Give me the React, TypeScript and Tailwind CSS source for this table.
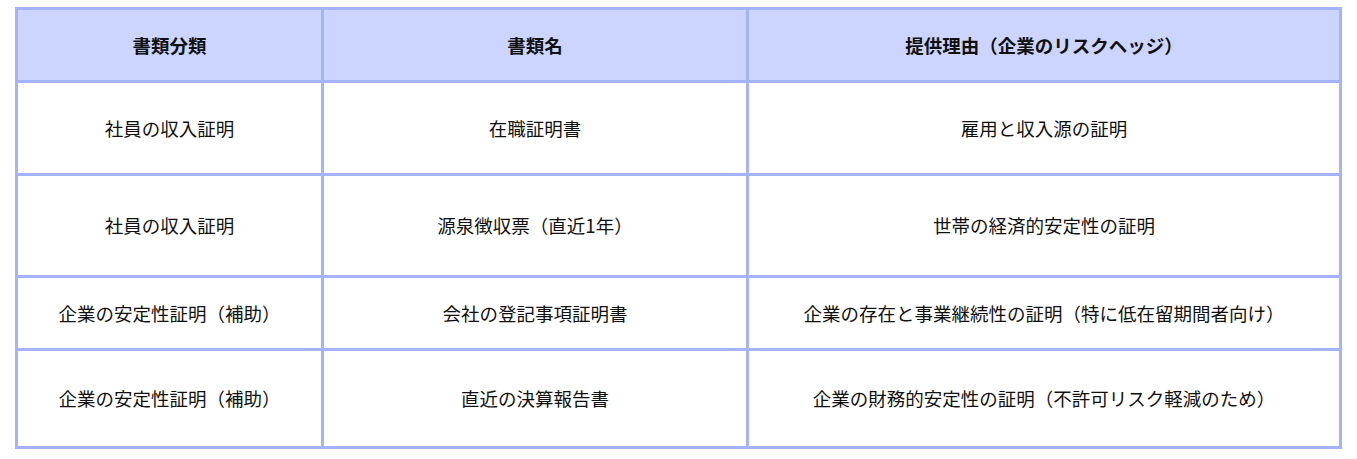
const rows = [
  ["社員の収入証明", "在職証明書", "雇用と収入源の証明"],
  ["社員の収入証明", "源泉徴収票（直近1年）", "世帯の経済的安定性の証明"],
  ["企業の安定性証明（補助）", "会社の登記事項証明書", "企業の存在と事業継続性の証明（特に低在留期間者向け）"],
  ["企業の安定性証明（補助）", "直近の決算報告書", "企業の財務的安定性の証明（不許可リスク軽減のため）"],
];

const heights = ["h-[93px]", "h-[102px]", "h-[73px]", "h-[98px]"];

export default function App() {
  return (
    <div
      className="bg-white px-[15px] pt-[7px] w-[1357px] h-[459px]"
      style={{ fontFamily: '"Noto Sans CJK JP", "Noto Sans", sans-serif' }}
    >
      <table className="w-[1327px] table-fixed border-collapse border-[3px] border-[#a3b3ff] text-[18.5px] leading-[1.3] text-[#111]">
        <colgroup>
          <col className="w-[306px]" />
          <col className="w-[425px]" />
          <col />
        </colgroup>
        <thead>
          <tr className="h-[73px] bg-[#ccd5ff]">
            <th className="border-[3px] border-[#a3b3ff] font-bold text-center">書類分類</th>
            <th className="border-[3px] border-[#a3b3ff] font-bold text-center">書類名</th>
            <th className="border-[3px] border-[#a3b3ff] font-bold text-center">提供理由（企業のリスクヘッジ）</th>
          </tr>
        </thead>
        <tbody>
          {rows.map((r, i) => (
            <tr key={i} className={heights[i]}>
              {r.map((c, j) => (
                <td key={j} className="border-[3px] border-[#a3b3ff] text-center align-middle">
                  {c}
                </td>
              ))}
            </tr>
          ))}
        </tbody>
      </table>
    </div>
  );
}
